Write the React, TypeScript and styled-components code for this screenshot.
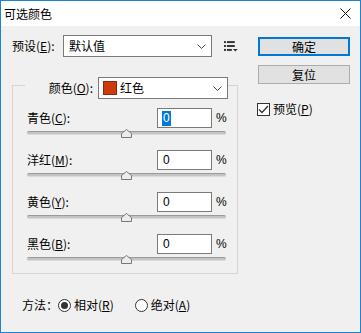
import styled, { createGlobalStyle } from 'styled-components'

const GlobalStyle = createGlobalStyle`
  html, body { margin: 0; padding: 0; background: #fff; }
  body {
    font-family: "Noto Sans CJK SC", "Noto Sans", sans-serif;
    font-size: 12px;
    color: #000;
  }
  * { box-sizing: border-box; }
`

const Window = styled.div`
  width: 361px;
  height: 333px;
  border: 1px solid #1883d7;
  background: #f0f0f0;
  display: flex;
  flex-direction: column;
`

const TitleBar = styled.div`
  height: 25px;
  flex: 0 0 25px;
  background: #fff;
  display: flex;
  align-items: center;
  justify-content: space-between;
  padding: 0 9px 0 3px;
  line-height: 16px;
`

const Body = styled.div`
  display: flex;
  gap: 20px;
  padding: 9px 0 0 11px;
`

const LeftColumn = styled.div`
  width: 226px;
  display: flex;
  flex-direction: column;
`

const RightColumn = styled.div`
  width: 92px;
  display: flex;
  flex-direction: column;
  padding-top: 2px;
`

const Row = styled.div`
  display: flex;
  align-items: center;
`

const PresetLabel = styled.span`
  width: 52px;
  line-height: 16px;
`

const SelectBox = styled.div<{ $width: number }>`
  width: ${p => p.$width}px;
  height: 22px;
  border: 1px solid #7a7a7a;
  background: #fff;
  display: flex;
  align-items: center;
  padding: 0 5px 0 5px;
  line-height: 16px;
  span.value { flex: 1; }
`

const Swatch = styled.span`
  width: 14px;
  height: 14px;
  background: #cc3a0f;
  border: 1px solid #8a2a0a;
  margin: 0 3px 0 -1px;
`

const Group = styled.fieldset`
  margin: 14px 0 0 0;
  border: 1px solid #d5d5d5;
  padding: 0 10px 5px 14px;
  min-width: 0;
`

const GroupLegend = styled.legend`
  margin-left: -2px;
  padding: 6px 0 0 0;
  width: 203px;
  display: flex;
  align-items: center;
  justify-content: flex-end;
  gap: 5px;
  line-height: 16px;
`

const Sliders = styled.div`
  display: flex;
  flex-direction: column;
  gap: 8px;
  padding-top: 9px;
`

const SliderBlock = styled.div`
  display: flex;
  flex-direction: column;
`

const SliderHead = styled.div`
  display: flex;
  align-items: center;
  height: 20px;
  line-height: 16px;
`

const SliderLabel = styled.span`
  flex: 1;
`

const NumberBox = styled.div`
  width: 55px;
  height: 20px;
  border: 1px solid #7a7a7a;
  background: #fff;
  padding-left: 4px;
  display: flex;
  align-items: center;
  font-family: "Liberation Sans", Arial, sans-serif;
  font-size: 12px;
`

const Highlight = styled.span<{ $on?: boolean }>`
  background: ${p => (p.$on ? '#0078d7' : 'transparent')};
  color: ${p => (p.$on ? '#fff' : '#000')};
  padding: 0 1px;
  line-height: 15px;
`

const Percent = styled.span`
  margin-left: 4px;
  width: 11px;
  font-family: "Liberation Sans", Arial, sans-serif;
`

const TrackZone = styled.div`
  position: relative;
  height: 14px;
  padding-top: 3px;
`

const Track = styled.div`
  width: 199px;
  height: 4px;
  border-radius: 2px;
  background: #c4c4c4;
  border-top: 1px solid #9a9a9a;
  border-bottom: 1px solid #dadada;
`

const Thumb = styled.svg`
  position: absolute;
  top: 1px;
  left: 94px;
`

const MethodRow = styled(Row)`
  margin-top: 23px;
  padding-left: 10px;
  line-height: 16px;
`

const Radio = styled.span<{ $checked?: boolean }>`
  width: 13px;
  height: 13px;
  border-radius: 50%;
  border: 1px solid #333;
  background: #fff;
  display: flex;
  align-items: center;
  justify-content: center;
  &::after {
    content: '';
    width: 7px;
    height: 7px;
    border-radius: 50%;
    background: ${p => (p.$checked ? '#333' : 'transparent')};
  }
`

const RadioLabel = styled.span<{ $gap?: number }>`
  margin-left: 3px;
  margin-right: ${p => p.$gap ?? 0}px;
`

const DialogButton = styled.div<{ $primary?: boolean }>`
  height: 19px;
  background: #e1e1e1;
  border: ${p => (p.$primary ? '2px solid #0078d7' : '1px solid #adadad')};
  display: flex;
  align-items: center;
  justify-content: center;
  line-height: 16px;
  & + & { margin-top: 9px; }
`

const CheckRow = styled(Row)`
  margin: 17px 0 0 -1px;
  line-height: 16px;
  gap: 3px;
`

const CheckBox = styled.span`
  width: 13px;
  height: 13px;
  border: 1px solid #333;
  background: #fff;
  display: flex;
  align-items: center;
  justify-content: center;
`

const Chevron = () => (
  <svg width="9" height="5" viewBox="0 0 9 5">
    <path d="M0.5 0.5 L4.5 4.5 L8.5 0.5" fill="none" stroke="#444" strokeWidth="1" />
  </svg>
)

const ListIcon = () => (
  <svg width="14" height="12" viewBox="0 0 14 12" style={{ marginLeft: 12 }}>
    <rect x="0" y="1" width="2" height="2" fill="#333" />
    <rect x="3" y="1" width="8" height="2" fill="#333" />
    <rect x="0" y="5" width="2" height="2" fill="#333" />
    <rect x="3" y="5" width="8" height="2" fill="#333" />
    <rect x="0" y="9" width="2" height="2" fill="#333" />
    <rect x="3" y="9" width="5" height="2" fill="#333" />
    <path d="M9 9 L14 9 L11.5 11.5 Z" fill="#333" />
  </svg>
)

const sliders = [
  { name: '青色', key: 'C', focus: true },
  { name: '洋红', key: 'M' },
  { name: '黄色', key: 'Y' },
  { name: '黑色', key: 'B' },
]

export default function App() {
  return (
    <>
      <GlobalStyle />
      <Window>
        <TitleBar>
          <span>可选颜色</span>
          <svg width="11" height="11" viewBox="0 0 11 11">
            <path d="M0.5 0.5 L10.5 10.5 M10.5 0.5 L0.5 10.5" stroke="#111" strokeWidth="1" />
          </svg>
        </TitleBar>
        <Body>
          <LeftColumn>
            <Row>
              <PresetLabel>预设(<u>E</u>):</PresetLabel>
              <SelectBox $width={152}>
                <span className="value">默认值</span>
                <Chevron />
              </SelectBox>
              <ListIcon />
            </Row>
            <Group>
              <GroupLegend>
                <span>颜色(<u>O</u>):</span>
                <SelectBox $width={130}>
                  <Swatch />
                  <span className="value">红色</span>
                  <Chevron />
                </SelectBox>
              </GroupLegend>
              <Sliders>
                {sliders.map(s => (
                  <SliderBlock key={s.key}>
                    <SliderHead>
                      <SliderLabel>{s.name}(<u>{s.key}</u>):</SliderLabel>
                      <NumberBox><Highlight $on={s.focus}>0</Highlight></NumberBox>
                      <Percent>%</Percent>
                    </SliderHead>
                    <TrackZone>
                      <Track />
                      <Thumb width="11" height="9" viewBox="0 0 11 9">
                        <path d="M0.5 8.5 L0.5 4.5 L5.5 0.5 L10.5 4.5 L10.5 8.5 Z" fill="#ececec" stroke="#777" strokeWidth="1" />
                      </Thumb>
                    </TrackZone>
                  </SliderBlock>
                ))}
              </Sliders>
            </Group>
            <MethodRow>
              <span>方法：</span>
              <Radio $checked />
              <RadioLabel $gap={21}>相对(<u>R</u>)</RadioLabel>
              <Radio />
              <RadioLabel>绝对(<u>A</u>)</RadioLabel>
            </MethodRow>
          </LeftColumn>
          <RightColumn>
            <DialogButton $primary>确定</DialogButton>
            <DialogButton>复位</DialogButton>
            <CheckRow>
              <CheckBox>
                <svg width="11" height="9" viewBox="0 0 11 9">
                  <path d="M1 4.5 L4 7.5 L10 1" fill="none" stroke="#333" strokeWidth="1.3" />
                </svg>
              </CheckBox>
              <span>预览(<u>P</u>)</span>
            </CheckRow>
          </RightColumn>
        </Body>
      </Window>
    </>
  )
}
